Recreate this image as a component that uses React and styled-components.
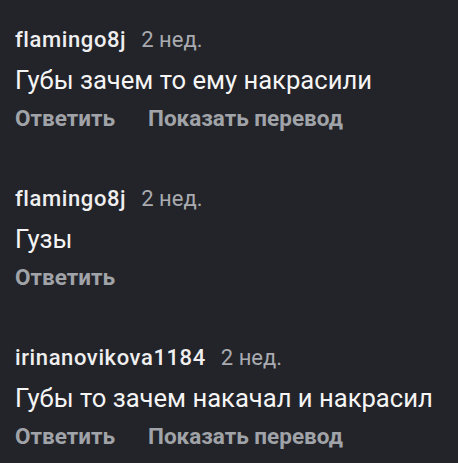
import React from 'react';
import styled, { createGlobalStyle } from 'styled-components';

const GlobalStyle = createGlobalStyle`
    html, body {
        margin: 0;
        padding: 0;
        background: #232429;
    }
    body {
        font-family: Roboto, "Noto Sans", sans-serif;
    }
`;

const comments = [
    { user: 'flamingo8j', time: '2 нед.', text: 'Губы зачем то ему накрасили', translate: true },
    { user: 'flamingo8j', time: '2 нед.', text: 'Гузы', translate: false },
    { user: 'irinanovikova1184', time: '2 нед.', text: 'Губы то зачем накачал и накрасил', translate: true },
];

function Comment({ user, time, text, translate }) {
    return (
        <CommentItem>
            <Header>
                <Username>{user}</Username>
                <Time>{time}</Time>
            </Header>
            <Body>{text}</Body>
            <Actions>
                <Action>Ответить</Action>
                {translate && <Action>Показать перевод</Action>}
            </Actions>
        </CommentItem>
    );
}

function App() {
    return (
        <Page>
            <GlobalStyle />
            {comments.map((c, i) => (
                <Comment key={i} {...c} />
            ))}
        </Page>
    );
}

const Page = styled.div`
    width: 458px;
    height: 463px;
    box-sizing: border-box;
    padding: 26px 15px 0;
    background: #232429;
    display: flex;
    flex-direction: column;
    gap: 53px;
    overflow: hidden;
`;

const CommentItem = styled.div`
    display: flex;
    flex-direction: column;
`;

const Header = styled.div`
    display: flex;
    align-items: baseline;
    gap: 15px;
    height: 28px;
    line-height: 28px;
    font-size: 22px;
`;

const Username = styled.span`
    color: #efeff0;
    font-weight: 500;
    letter-spacing: 0.6px;
`;

const Time = styled.span`
    color: #a9abb0;
    font-weight: 400;
`;

const Body = styled.div`
    margin-top: 9px;
    font-size: 25.6px;
    line-height: 34px;
    color: #f5f5f5;
`;

const Actions = styled.div`
    display: flex;
    gap: 33px;
    margin-top: 7px;
    font-size: 22.5px;
    line-height: 28px;
`;

const Action = styled.span`
    color: #a0a3a8;
    font-weight: 700;
`;

export default App;
